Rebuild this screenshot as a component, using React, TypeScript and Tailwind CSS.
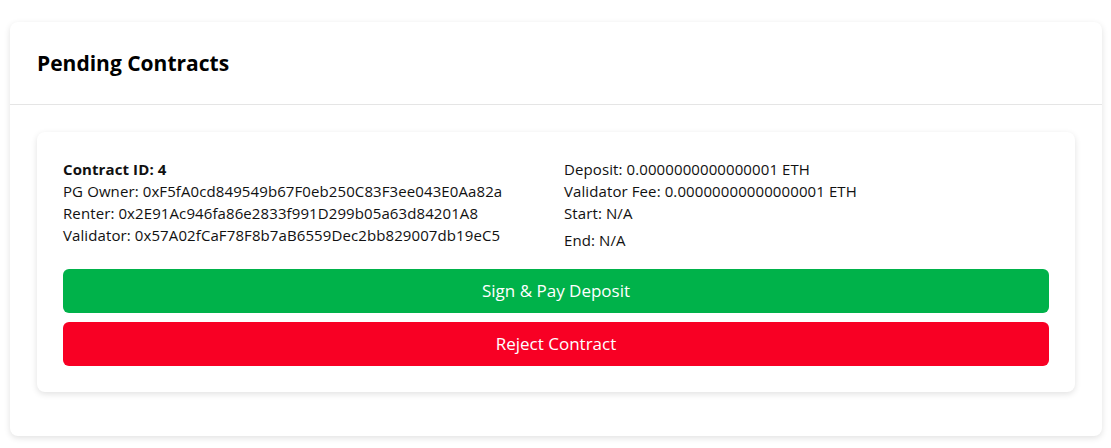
const contract = {
  id: 4,
  owner: "0xF5fA0cd849549b67F0eb250C83F3ee043E0Aa82a",
  renter: "0x2E91Ac946fa86e2833f991D299b05a63d84201A8",
  validator: "0x57A02fCaF78F8b7aB6559Dec2bb829007db19eC5",
  deposit: "0.0000000000000001",
  fee: "0.00000000000000001",
};

const ContractCard = () => {
  return (
    <div className="rounded-lg bg-white p-[26px] shadow-[0_2px_6px_rgba(0,0,0,0.12)]">
      <div className="grid grid-cols-2 gap-4 text-[15px] leading-[22px] tracking-[0.1px] text-[#111]">
        <div>
          <p className="font-bold">Contract ID: {contract.id}</p>
          <p>PG Owner: {contract.owner}</p>
          <p>Renter: {contract.renter}</p>
          <p>Validator: {contract.validator}</p>
        </div>
        <div>
          <p>Deposit: {contract.deposit} ETH</p>
          <p>Validator Fee: {contract.fee} ETH</p>
          <p>Start: N/A</p>
          <p className="mt-[5px]">End: N/A</p>
        </div>
      </div>
      <button className="mt-[18px] flex h-[44px] w-full items-center justify-center rounded-md bg-[#00b24a] text-[17px] text-white">
        Sign &amp; Pay Deposit
      </button>
      <button className="mt-[9px] flex h-[44px] w-full items-center justify-center rounded-md bg-[#f80024] text-[17px] text-white">
        Reject Contract
      </button>
    </div>
  );
};

export default function App() {
  return (
    <div className="min-h-[448px] bg-white pt-[22px] font-['Open_Sans',sans-serif]">
      <div className="ml-[10px] w-[1092px] rounded-lg bg-white shadow-[0_2px_6px_rgba(0,0,0,0.12)]">
        <div className="border-b border-[#e5e5e5] px-[27px] py-[27px]">
          <h2 className="text-[21px] font-bold leading-[28px] text-black">Pending Contracts</h2>
        </div>
        <div className="px-[27px] pb-[44px] pt-[27px]">
          <ContractCard />
        </div>
      </div>
    </div>
  );
}
